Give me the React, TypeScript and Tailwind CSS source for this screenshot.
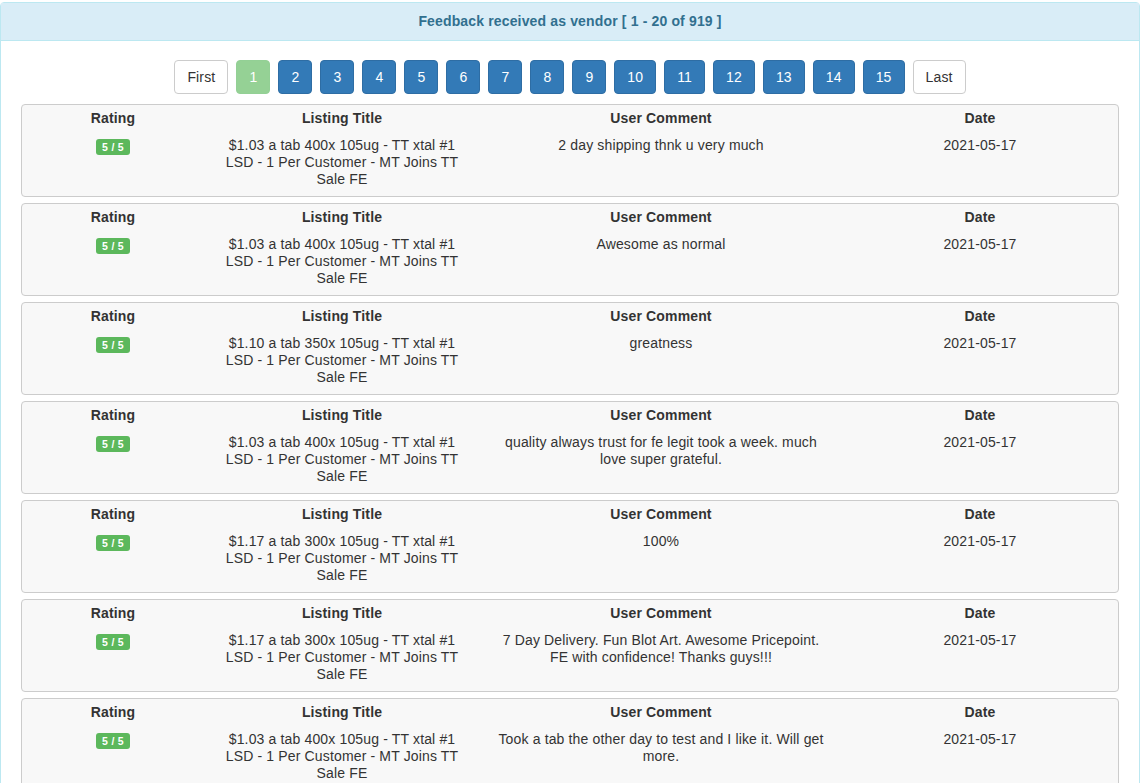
import React from "react";

interface Feedback {
  title: string;
  comment: string;
  date: string;
}

const t103 = "$1.03 a tab 400x 105ug - TT xtal #1 LSD - 1 Per Customer - MT Joins TT Sale FE";
const t110 = "$1.10 a tab 350x 105ug - TT xtal #1 LSD - 1 Per Customer - MT Joins TT Sale FE";
const t117 = "$1.17 a tab 300x 105ug - TT xtal #1 LSD - 1 Per Customer - MT Joins TT Sale FE";

const FEEDBACK: Feedback[] = [
  { title: t103, comment: "2 day shipping thnk u very much", date: "2021-05-17" },
  { title: t103, comment: "Awesome as normal", date: "2021-05-17" },
  { title: t110, comment: "greatness", date: "2021-05-17" },
  { title: t103, comment: "quality always trust for fe legit took a week. much love super grateful.", date: "2021-05-17" },
  { title: t117, comment: "100%", date: "2021-05-17" },
  { title: t117, comment: "7 Day Delivery. Fun Blot Art. Awesome Pricepoint. FE with confidence! Thanks guys!!!", date: "2021-05-17" },
  { title: t103, comment: "Took a tab the other day to test and I like it. Will get more.", date: "2021-05-17" },
];

const PAGES = [2, 3, 4, 5, 6, 7, 8, 9, 10, 11, 12, 13, 14, 15];

function FeedbackCard({ item }: { item: Feedback }) {
  return (
    <div className="border border-[#cccccc] rounded bg-[#f8f8f8] pt-[3px] pb-[8px]">
      {/* Headings */}
      <div className="flex font-bold leading-5">
        <div className="w-[182px] text-center">Rating</div>
        <div className="w-[276px] text-center">Listing Title</div>
        <div className="w-[362px] text-center">User Comment</div>
        <div className="flex-1 text-center">Date</div>
      </div>

      {/* Values */}
      <div className="flex leading-[17px] mt-[9px]">
        <div className="w-[182px] flex justify-center">
          <span className="mt-[2px] h-[16px] px-[6px] rounded-[3px] bg-[#5cb85c] text-white text-[10.5px] font-bold leading-4 tracking-[0.3px]">
            5 / 5
          </span>
        </div>
        <div className="w-[276px] px-[20px] text-center">{item.title}</div>
        <div className="w-[362px] px-[15px] text-center">{item.comment}</div>
        <div className="flex-1 text-center">{item.date}</div>
      </div>
    </div>
  );
}

export default function App() {
  return (
    <div
      className="w-[1141px] h-[783px] overflow-hidden bg-white text-[14px] text-[#333333] tracking-[0.15px] pt-[2px]"
      style={{ fontFamily: '"Liberation Sans", Arial, sans-serif' }}
    >
      <div className="w-[1140px] border border-[#bce8f1] rounded-t">
        {/* Panel heading */}
        <div className="h-[38px] flex items-center justify-center bg-[#d9edf7] border-b border-[#bce8f1] text-[#31708f] font-bold text-[14px]">
          Feedback received as vendor [ 1 - 20 of 919 ]
        </div>

        <div className="px-[20px] pt-[19px]">
          {/* Pagination */}
          <div className="flex justify-center gap-2 mb-[10px]">
            <button className="h-[34px] px-[12px] border border-[#cccccc] rounded bg-white text-[#333333]">
              First
            </button>
            <button className="h-[34px] min-w-[34px] px-[12px] border border-[#93d095] rounded bg-[#95d195] text-white">
              1
            </button>
            {PAGES.map((p) => (
              <button
                key={p}
                className="h-[34px] min-w-[34px] px-[12px] border border-[#2e6da4] rounded bg-[#337ab7] text-white"
              >
                {p}
              </button>
            ))}
            <button className="h-[34px] px-[12px] border border-[#cccccc] rounded bg-white text-[#333333]">
              Last
            </button>
          </div>

          {/* Feedback list */}
          <div className="flex flex-col gap-[6px]">
            {FEEDBACK.map((item, i) => (
              <FeedbackCard key={i} item={item} />
            ))}
          </div>
        </div>
      </div>
    </div>
  );
}
